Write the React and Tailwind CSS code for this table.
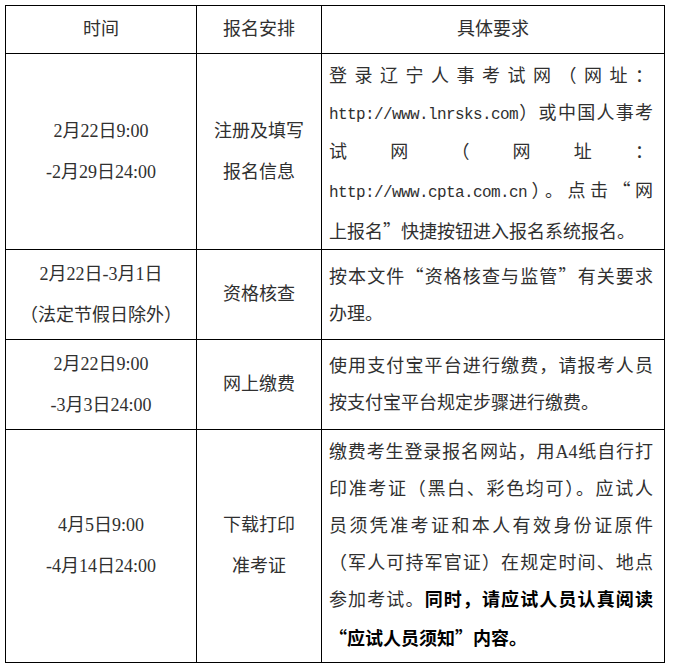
import React from 'react';

const serif = "font-['Liberation_Serif','Noto_Sans_CJK_SC',serif]";

// full-width curly quotes, taken from the CJK face like SimSun draws them
const Open = () => <span className="font-['Noto_Sans_CJK_SC',sans-serif]">“</span>;
const Close = () => <span className="font-['Noto_Sans_CJK_SC',sans-serif]">”</span>;
const Url = ({ children }) => (
  <span className="font-['Liberation_Mono',monospace] text-[16px] tracking-[-0.6px]">{children}</span>
);

// one line stretched across the column, as the justified source does
const Line = ({ children, last }) => (
  <div className={last ? 'whitespace-nowrap' : 'whitespace-nowrap text-justify [text-align-last:justify]'}>
    {children}
  </div>
);

const Cell = ({ children, className = '' }) => (
  <div className={`flex flex-col justify-center border-r border-b border-black ${className}`}>{children}</div>
);

const Center = ({ lines }) => (
  <Cell className="items-center text-center leading-[41px]">
    {lines.map((l, i) => (
      <div key={i}>{l}</div>
    ))}
  </Cell>
);

const Detail = ({ lines, className = '' }) => (
  <Cell className={`pl-[7px] pr-[11px] leading-[37px] ${className}`}>
    {lines.map((l, i) => (
      <Line key={i} last={i === lines.length - 1}>
        {l}
      </Line>
    ))}
  </Cell>
);

export default function App() {
  return (
    <div className={`min-h-[670px] bg-white pt-[5px] pl-[5px] text-[18px] text-[#303030] ${serif}`}>
      <div className="grid w-[660px] grid-cols-[191px_125px_343px] grid-rows-[48px_196px_90px_90px_233px] border-l border-t border-black">
        {/* header */}
        <Center lines={['时间']} />
        <Center lines={['报名安排']} />
        <Center lines={['具体要求']} />

        {/* 注册 */}
        <Center lines={['2月22日9:00', '-2月29日24:00']} />
        <Center lines={['注册及填写', '报名信息']} />
        <Detail
          className="pt-[5px]"
          lines={[
            '登录辽宁人事考试网（网址：',
            <>
              <Url>http://www.lnrsks.com</Url>）或中国人事考
            </>,
            '试网（网址：',
            <>
              <Url>http://www.cpta.com.cn</Url>）。点击<Open />网
            </>,
            <>
              上报名<Close />快捷按钮进入报名系统报名。
            </>,
          ]}
        />

        {/* 资格核查 */}
        <Center lines={['2月22日-3月1日', '（法定节假日除外）']} />
        <Center lines={['资格核查']} />
        <Detail
          lines={[
            <>
              按本文件<Open />资格核查与监管<Close />有关要求
            </>,
            '办理。',
          ]}
        />

        {/* 缴费 */}
        <Center lines={['2月22日9:00', '-3月3日24:00']} />
        <Center lines={['网上缴费']} />
        <Detail lines={['使用支付宝平台进行缴费，请报考人员', '按支付宝平台规定步骤进行缴费。']} />

        {/* 准考证 */}
        <Center lines={['4月5日9:00', '-4月14日24:00']} />
        <Center lines={['下载打印', '准考证']} />
        <Detail
          lines={[
            '缴费考生登录报名网站，用A4纸自行打',
            '印准考证（黑白、彩色均可）。应试人',
            '员须凭准考证和本人有效身份证原件',
            '（军人可持军官证）在规定时间、地点',
            <>
              参加考试。<b className="font-bold text-black">同时，请应试人员认真阅读</b>
            </>,
            <b className="font-bold text-black">
              <Open />应试人员须知<Close />内容。
            </b>,
          ]}
        />
      </div>
    </div>
  );
}
